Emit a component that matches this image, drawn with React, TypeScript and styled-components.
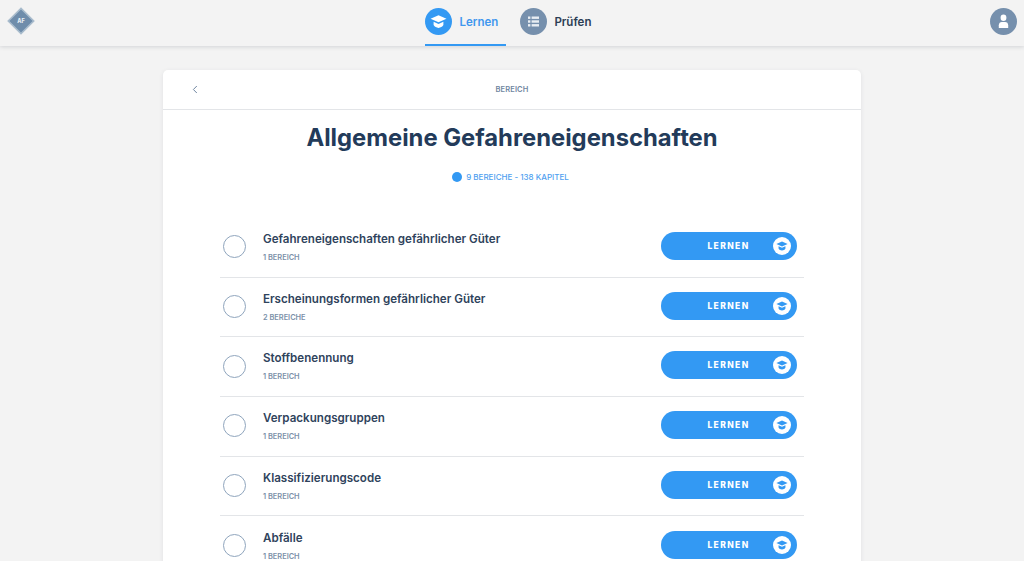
import styled, { createGlobalStyle } from "styled-components";

const GlobalStyle = createGlobalStyle`
    html, body {
        margin: 0;
        height: 100%;
        overflow: hidden;
        background: #f3f3f3;
        font-family: "Inter", "Liberation Sans", sans-serif;
    }
`;

const TopBar = styled.header`
    height: 46px;
    box-sizing: border-box;
    padding: 0 7px;
    background: #f3f3f3;
    box-shadow: 0 1px 4px rgba(60, 70, 90, 0.18);
    display: grid;
    grid-template-columns: 1fr auto 1fr;
    align-items: stretch;
`;

const Logo = styled.div`
    align-self: start;
    margin-top: 7px;
    width: 28px;
    height: 28px;
`;

const Nav = styled.nav`
    display: flex;
    gap: 14px;
    padding-right: 8px;
`;

const NavItem = styled.div<{ $active?: boolean }>`
    display: flex;
    align-items: flex-start;
    gap: ${(p) => (p.$active ? "8px" : "7px")};
    padding: 8px ${(p) => (p.$active ? "8px" : "0")} 0 0;
    box-sizing: border-box;
    height: 46px;
    border-bottom: 2px solid ${(p) => (p.$active ? "#3399f3" : "transparent")};
    color: ${(p) => (p.$active ? "#3f97ee" : "#2c3e55")};
    font-size: 11.5px;
    font-weight: 600;
`;

const NavLabel = styled.span`
    line-height: 29px;
`;

const NavIcon = styled.div<{ $active?: boolean }>`
    width: 27px;
    height: 27px;
    border-radius: 50%;
    background: ${(p) => (p.$active ? "#3399f3" : "#7690ad")};
    display: flex;
    align-items: center;
    justify-content: center;
`;

const Avatar = styled(NavIcon)`
    justify-self: end;
    align-self: start;
    margin-top: 8px;
`;

const Main = styled.main`
    display: flex;
    justify-content: center;
    padding-top: 24px;
`;

const Card = styled.section`
    width: 698px;
    background: #fff;
    border-radius: 5px 5px 0 0;
    box-shadow: 0 1px 4px rgba(60, 70, 90, 0.1);
`;

const CardHead = styled.div`
    height: 40px;
    box-sizing: border-box;
    padding-left: 29px;
    border-bottom: 1px solid #e3e5e8;
    display: grid;
    grid-template-columns: 8px 1fr 37px;
    align-items: center;
`;

const CardHeadTitle = styled.span`
    text-align: center;
    font-size: 7.5px;
    font-weight: 600;
    color: #6f86a1;
    letter-spacing: 0.1px;
`;

const Title = styled.h1`
    margin: 13px 0 0;
    text-align: center;
    font-size: 23.8px;
    line-height: 30px;
    font-weight: 700;
    color: #233b5a;
`;

const Meta = styled.div`
    margin-top: 18px;
    padding-right: 3px;
    display: flex;
    justify-content: center;
    align-items: center;
    gap: 4px;
    font-size: 8px;
    line-height: 12px;
    font-weight: 500;
    color: #4f9ff0;
`;

const Dot = styled.span`
    width: 10px;
    height: 10px;
    border-radius: 50%;
    background: #3399f3;
`;

const List = styled.ul`
    list-style: none;
    margin: 35px 57px 0;
    padding: 0;
`;

const Row = styled.li`
    height: 59.7px;
    box-sizing: border-box;
    padding: 0 7px 0 3px;
    border-bottom: 1px solid #e3e5e8;
    display: flex;
    align-items: center;
    gap: 17px;

    &:last-child {
        border-bottom: none;
    }
`;

const Radio = styled.span`
    width: 23px;
    height: 23px;
    box-sizing: border-box;
    border: 1px solid #8fa5bd;
    border-radius: 50%;
    flex: none;
    margin-bottom: 1px;
`;

const RowText = styled.div`
    flex: 1;
    padding-bottom: 1px;
`;

const RowTitle = styled.div`
    font-size: 11.6px;
    line-height: 16px;
    font-weight: 600;
    color: #2f435c;
`;

const RowSub = styled.div`
    margin-top: 6px;
    font-size: 7.4px;
    line-height: 10px;
    font-weight: 600;
    color: #7c91a9;
`;

const LearnButton = styled.button`
    width: 136px;
    height: 28px;
    padding: 0 3px 0 0;
    border: none;
    border-radius: 14px;
    background: #3399f3;
    color: #fff;
    font: 800 8.5px "Inter", "Liberation Sans", sans-serif;
    letter-spacing: 1.4px;
    display: flex;
    align-items: center;
    margin-bottom: 3px;
`;

const LearnLabel = styled.span`
    flex: 1;
    text-align: center;
    padding-left: 23px;
`;

const LearnIcon = styled.span`
    width: 18px;
    height: 18px;
    margin-right: 3px;
    border-radius: 50%;
    background: #fff;
    display: flex;
    align-items: center;
    justify-content: center;
`;

const CapIcon = ({ color, size }: { color: string; size: number }) => (
    <svg width={size} height={size} viewBox="0 0 16 16" fill={color}>
        <path d="M8 2 L15.5 5.4 L8 8.8 L0.5 5.4 Z" />
        <path d="M3.4 8.2 L8 10.3 L12.6 8.2 V11.4 C11.6 13.2 9.9 14 8 14 C6.1 14 4.4 13.2 3.4 11.4 Z" />
    </svg>
);

const ListIcon = () => (
    <svg width="13" height="13" viewBox="0 0 13 13" fill="#e9eef3">
        <rect x="1" y="1.5" width="2.4" height="2.4" />
        <rect x="1" y="5.3" width="2.4" height="2.4" />
        <rect x="1" y="9.1" width="2.4" height="2.4" />
        <rect x="4.6" y="1.5" width="7.4" height="2.4" />
        <rect x="4.6" y="5.3" width="7.4" height="2.4" />
        <rect x="4.6" y="9.1" width="7.4" height="2.4" />
    </svg>
);

const UserIcon = () => (
    <svg width="13" height="15" viewBox="0 0 13 15" fill="#fff">
        <ellipse cx="6.5" cy="3.8" rx="2.9" ry="3.3" />
        <path d="M1.8 14 V11.3 C1.8 9.2 3.2 8 4.8 8 H8.2 C9.8 8 11.2 9.2 11.2 11.3 V14 Z" />
    </svg>
);

const LogoMark = () => (
    <svg width="28" height="28" viewBox="0 0 28 28">
        <rect x="5" y="5" width="18" height="18" transform="rotate(45 14 14)" fill="#6f8dab" stroke="#a9bccd" strokeWidth="1.6" />
        <text x="14" y="16" textAnchor="middle" fontSize="5.5" fontWeight="800" fill="#e6ecf2" fontFamily="Inter, sans-serif">AF</text>
    </svg>
);

const ChevronLeft = () => (
    <svg width="6" height="9" viewBox="0 0 6 9" fill="none" stroke="#6f86a1" strokeWidth="1">
        <path d="M4.8 1 L1.4 4.5 L4.8 8" />
    </svg>
);

const rows = [
    { title: "Gefahreneigenschaften gefährlicher Güter", sub: "1 BEREICH" },
    { title: "Erscheinungsformen gefährlicher Güter", sub: "2 BEREICHE" },
    { title: "Stoffbenennung", sub: "1 BEREICH" },
    { title: "Verpackungsgruppen", sub: "1 BEREICH" },
    { title: "Klassifizierungscode", sub: "1 BEREICH" },
    { title: "Abfälle", sub: "1 BEREICH" },
];

const App = () => {
    return (
        <>
            <GlobalStyle />
            <TopBar>
                <Logo>
                    <LogoMark />
                </Logo>
                <Nav>
                    <NavItem $active>
                        <NavIcon $active>
                            <CapIcon color="#fff" size={17} />
                        </NavIcon>
                        <NavLabel>Lernen</NavLabel>
                    </NavItem>
                    <NavItem>
                        <NavIcon>
                            <ListIcon />
                        </NavIcon>
                        <NavLabel>Prüfen</NavLabel>
                    </NavItem>
                </Nav>
                <Avatar>
                    <UserIcon />
                </Avatar>
            </TopBar>
            <Main>
                <Card>
                    <CardHead>
                        <ChevronLeft />
                        <CardHeadTitle>BEREICH</CardHeadTitle>
                    </CardHead>
                    <Title>Allgemeine Gefahreneigenschaften</Title>
                    <Meta>
                        <Dot />
                        9 BEREICHE - 138 KAPITEL
                    </Meta>
                    <List>
                        {rows.map((item) => (
                            <Row key={item.title}>
                                <Radio />
                                <RowText>
                                    <RowTitle>{item.title}</RowTitle>
                                    <RowSub>{item.sub}</RowSub>
                                </RowText>
                                <LearnButton>
                                    <LearnLabel>LERNEN</LearnLabel>
                                    <LearnIcon>
                                        <CapIcon color="#3399f3" size={12} />
                                    </LearnIcon>
                                </LearnButton>
                            </Row>
                        ))}
                    </List>
                </Card>
            </Main>
        </>
    );
};

export default App;
